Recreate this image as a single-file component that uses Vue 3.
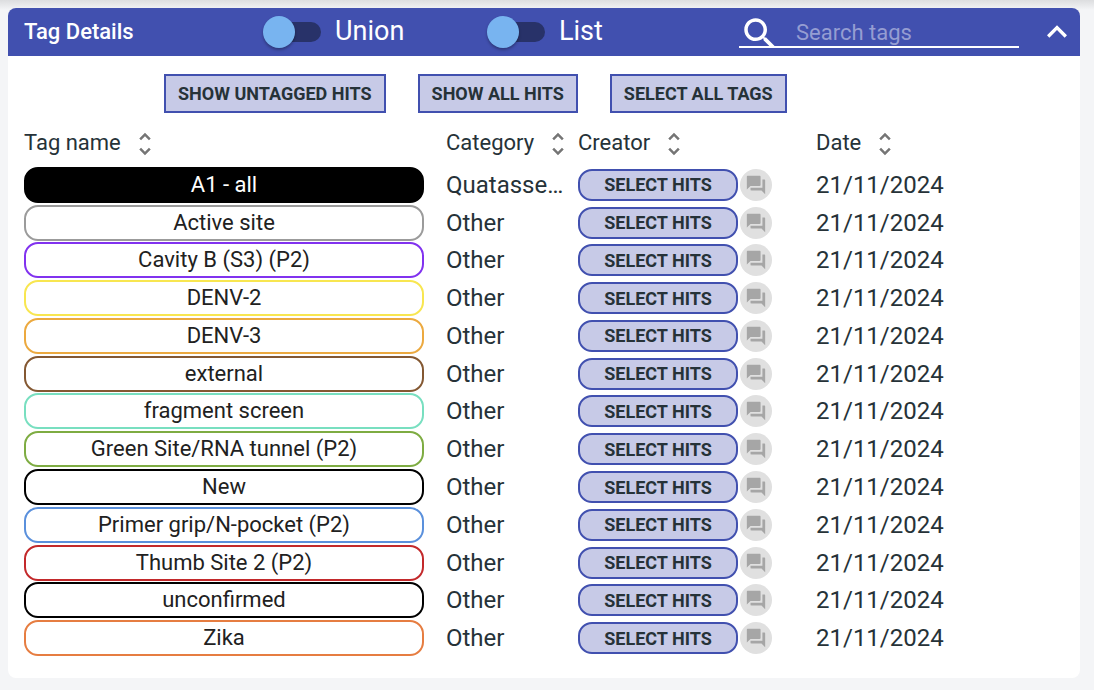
<script setup>
import { ref, computed } from 'vue'

const union = ref(false)
const list = ref(false)
const query = ref('')
const open = ref(true)

const columns = [
  { key: 'name', label: 'Tag name' },
  { key: 'category', label: 'Category' },
  { key: 'creator', label: 'Creator' },
  { key: 'date', label: 'Date' }
]

const tags = [
  { name: 'A1 - all', color: '#000000', filled: true, category: 'Quatasse…' },
  { name: 'Active site', color: '#9b9b9b' },
  { name: 'Cavity B (S3) (P2)', color: '#8132ef' },
  { name: 'DENV-2', color: '#f8e650' },
  { name: 'DENV-3', color: '#eca93f' },
  { name: 'external', color: '#845832' },
  { name: 'fragment screen', color: '#78dfc0' },
  { name: 'Green Site/RNA tunnel (P2)', color: '#7eac42' },
  { name: 'New', color: '#000000' },
  { name: 'Primer grip/N-pocket (P2)', color: '#5a90dc' },
  { name: 'Thumb Site 2 (P2)', color: '#c3292b' },
  { name: 'unconfirmed', color: '#000000' },
  { name: 'Zika', color: '#e67d41' }
].map((t) => ({ category: 'Other', date: '21/11/2024', ...t }))

const visible = computed(() =>
  tags.filter((t) => t.name.toLowerCase().includes(query.value.toLowerCase()))
)

const chipStyle = (t) => ({
  borderColor: t.color,
  backgroundColor: t.filled ? t.color : '#ffffff',
  color: t.filled ? '#ffffff' : '#212121'
})
</script>

<template>
  <main class="page">
    <section class="card">
      <header class="bar">
        <h1 class="title">Tag Details</h1>
        <label class="toggle"><input v-model="union" type="checkbox" role="switch" /><span>Union</span></label>
        <label class="toggle"><input v-model="list" type="checkbox" role="switch" /><span>List</span></label>
        <div class="search">
          <svg viewBox="0 0 24 24" aria-hidden="true"><path d="M15.5 14h-.79l-.28-.27C15.41 12.59 16 11.11 16 9.5 16 5.91 13.09 3 9.5 3S3 5.91 3 9.5 5.91 16 9.5 16c1.61 0 3.09-.59 4.23-1.57l.27.28v.79l5 4.99L20.49 19l-4.99-5zm-6 0C7.01 14 5 11.99 5 9.5S7.01 5 9.5 5 14 7.01 14 9.5 11.99 14 9.5 14z" /></svg>
          <input v-model="query" type="text" placeholder="Search tags" aria-label="Search tags" />
        </div>
        <button class="collapse" type="button" aria-label="Collapse" @click="open = !open">
          <svg viewBox="0 0 24 24" aria-hidden="true"><path d="M12 8l-6 6 1.41 1.41L12 10.83l4.59 4.58L18 14z" /></svg>
        </button>
      </header>

      <div v-if="open" class="body">
        <div class="actions">
          <button type="button">SHOW UNTAGGED HITS</button>
          <button type="button">SHOW ALL HITS</button>
          <button type="button">SELECT ALL TAGS</button>
        </div>
        <table class="tags">
          <thead>
            <tr>
              <th v-for="c in columns" :key="c.key" :class="c.key" scope="col">
                <div class="head">
                  <span>{{ c.label }}</span>
                  <button type="button" :aria-label="'Sort by ' + c.label">
                    <svg viewBox="0 0 24 24" aria-hidden="true"><path d="M12 5.83L15.17 9l1.41-1.41L12 3 7.41 7.59 8.83 9 12 5.83zm0 12.34L8.83 15l-1.41 1.41L12 21l4.59-4.59L15.17 15 12 18.17z" /></svg>
                  </button>
                </div>
              </th>
            </tr>
          </thead>
          <tbody>
            <tr v-for="t in visible" :key="t.name">
              <td><button type="button" class="chip" :style="chipStyle(t)">{{ t.name }}</button></td>
              <td><div class="category-text">{{ t.category }}</div></td>
              <td>
                <div class="creator-cell">
                  <button type="button" class="select">SELECT HITS</button>
                  <button type="button" class="chat" :aria-label="'Discuss ' + t.name">
                    <svg viewBox="0 0 24 24" aria-hidden="true"><path d="M21 6h-2v9H6v2c0 .55.45 1 1 1h11l4 4V7c0-.55-.45-1-1-1zm-4 6V3c0-.55-.45-1-1-1H3c-.55 0-1 .45-1 1v14l4-4h10c.55 0 1-.45 1-1z" /></svg>
                  </button>
                </div>
              </td>
              <td>{{ t.date }}</td>
            </tr>
          </tbody>
        </table>
      </div>
    </section>
  </main>
</template>

<style>
body {
  background: #f4f5f7;
}
</style>

<style scoped>
.page {
  box-sizing: border-box;
  display: flex;
  flex-direction: column;
  min-height: 100vh;
  padding: 8px 14px 12px 8px;
  font-family: Roboto, "Liberation Sans", sans-serif;
  font-size: 22px;
  color: #263238;
  background: linear-gradient(#dcdddf, #f4f5f7 10px);
}
.page * {
  box-sizing: border-box;
}
button,
input {
  font-family: inherit;
  color: inherit;
  margin: 0;
}
button {
  cursor: pointer;
}
svg {
  display: block;
  fill: currentColor;
}
.card {
  flex: 1;
  display: flex;
  flex-direction: column;
  background: #fff;
  border-radius: 8px;
  overflow: hidden;
}
.bar {
  display: flex;
  align-items: center;
  height: 48px;
  padding: 0 3px 0 16px;
  background: #4150af;
  color: #fff;
}
.title {
  width: 239px;
  margin: 0;
  padding-bottom: 2px;
  font-size: 22px;
  font-weight: 500;
}
.toggle {
  display: flex;
  align-items: center;
  gap: 14px;
  width: 224px;
  font-size: 27px;
  line-height: 32px;
}
.toggle span {
  padding-bottom: 2px;
}
.toggle input {
  appearance: none;
  flex: none;
  display: flex;
  align-items: center;
  width: 50px;
  height: 20px;
  margin-left: 8px;
  background: #283269;
  border-radius: 10px;
}
.toggle input::before {
  content: "";
  flex: none;
  width: 32px;
  height: 32px;
  margin-left: -8px;
  border-radius: 50%;
  background: #78b4f0;
  box-shadow: 0 2px 3px rgba(0, 0, 0, 0.3);
}
.toggle input:checked {
  justify-content: flex-end;
}
.search {
  display: flex;
  align-items: center;
  width: 280px;
  height: 32px;
  margin-left: auto;
  border-bottom: 2px solid #fff;
  overflow: hidden;
}
.search svg {
  flex: none;
  width: 42px;
  height: 42px;
  margin-top: 6px;
}
.search input {
  flex: 1;
  min-width: 0;
  padding: 2px 0 0 15px;
  border: 0;
  outline: 0;
  background: none;
  font-size: 22px;
}
.search input::placeholder {
  color: #959dd2;
  opacity: 1;
}
.collapse {
  margin-left: 18px;
  padding: 0;
  border: 0;
  background: none;
}
.collapse svg {
  width: 40px;
  height: 40px;
}
.body {
  flex: 1;
  display: flex;
  flex-direction: column;
  padding: 18px 16px 21px;
}
.actions {
  display: flex;
  gap: 32px;
  padding-left: 140px;
}
.actions button {
  height: 39px;
  padding: 0 12px;
  border: 2px solid #4150af;
  background: #c7cae7;
  font-size: 18px;
  font-weight: 700;
}
.tags {
  flex: 1;
  width: 100%;
  margin-top: 9px;
  table-layout: fixed;
  border-collapse: collapse;
}
th,
td {
  padding: 0;
  text-align: left;
  vertical-align: middle;
}
th {
  height: 44px;
  font-weight: 400;
}
th.name {
  width: 422px;
}
th.category {
  width: 132px;
}
th.creator {
  width: 238px;
}
.head {
  display: flex;
  align-items: center;
  gap: 9px;
  padding-bottom: 4px;
}
.head button {
  padding: 4px 0 0;
  border: 0;
  background: none;
  color: #757575;
}
.head svg {
  width: 30px;
  height: 30px;
}
td {
  font-size: 24px;
  line-height: 32px;
}
.chip {
  display: block;
  width: 400px;
  height: 36px;
  padding: 0;
  border: 2px solid;
  border-radius: 14px;
  font-size: 22px;
  line-height: 32px;
}
.category-text {
  width: 120px;
  overflow: hidden;
  text-overflow: ellipsis;
  white-space: nowrap;
}
.creator-cell {
  display: flex;
  gap: 2px;
}
.select {
  width: 160px;
  height: 32px;
  padding: 0;
  border: 2px solid #4150af;
  border-radius: 14px;
  background: #c7cae7;
  font-size: 18px;
  font-weight: 700;
}
.chat {
  display: grid;
  place-items: center;
  width: 32px;
  height: 32px;
  padding: 0;
  border: 0;
  border-radius: 50%;
  background: #e0e0e0;
  color: #a6a6a6;
}
.chat svg {
  width: 22px;
  height: 22px;
}
</style>
